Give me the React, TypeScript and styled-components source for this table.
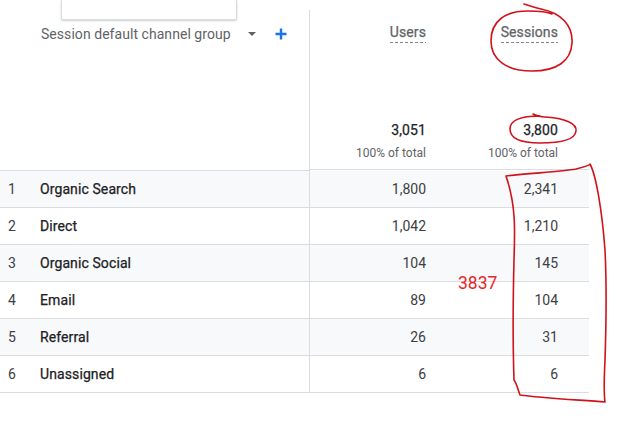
import React from "react";
import styled, { createGlobalStyle } from "styled-components";

const Global = createGlobalStyle`
  html, body { margin: 0; padding: 0; background: #fff; }
  body { font-family: Roboto, "Liberation Sans", Arial, sans-serif; -webkit-font-smoothing: antialiased; }
`;

const medium = `font-weight: 400; -webkit-text-stroke: 0.25px currentColor; letter-spacing: 0.1px;`;

const Page = styled.div`
  position: relative;
  width: 630px;
  height: 422px;
  overflow: hidden;
  background: #fff;
`;

const Table = styled.div`
  width: 589px;
  display: grid;
  grid-template-columns: 310px 132px 132px 15px;
`;

const DimHeader = styled.div`
  height: 160px;
  margin-top: 10px;
  border-right: 1px solid #dadce0;
  border-bottom: 1px solid #dadce0;
  display: flex;
  flex-direction: column;
`;

const Card = styled.div`
  margin: -10px 0 0 61px;
  width: 174px;
  height: 19px;
  border: 1px solid #dadce0;
  border-top: none;
  border-radius: 0 0 2px 2px;
  box-shadow: 0 1px 2px rgba(60, 64, 67, 0.25);
  background: #fff;
`;

const DimTitleRow = styled.div`
  display: flex;
  align-items: center;
  height: 28px;
  padding-left: 41px;
  color: #5f6368;
  font-size: 14px;
  letter-spacing: 0.05px;
`;

const Caret = styled.span`
  width: 0;
  height: 0;
  margin-left: 17px;
  border-left: 4px solid transparent;
  border-right: 4px solid transparent;
  border-top: 4px solid #5f6368;
`;

const PlusButton = styled.span`
  display: flex;
  margin-left: 19px;
  color: #1a73e8;
`;

const MetricHeader = styled.div`
  height: 170px;
  box-sizing: border-box;
  border-bottom: 1px solid #dadce0;
  padding: 23px 16px 8px 0;
  display: flex;
  flex-direction: column;
  align-items: flex-end;
  justify-content: space-between;
`;

const Filler = styled.div`
  height: 170px;
  box-sizing: border-box;
  border-bottom: 1px solid #dadce0;
`;

const MetricName = styled.span`
  ${medium}
  font-size: 14px;
  line-height: 18px;
  color: #5f6368;
  padding-bottom: 2px;
  background-image: repeating-linear-gradient(to right, #80868b 0 3px, transparent 3px 5px);
  background-size: 100% 1px;
  background-repeat: no-repeat;
  background-position: bottom left;
`;

const Totals = styled.div`
  display: flex;
  flex-direction: column;
  align-items: flex-end;
`;

const TotalValue = styled.span`
  ${medium}
  font-size: 14px;
  line-height: 20px;
  color: #202124;
`;

const TotalSub = styled.span`
  font-size: 12px;
  line-height: 16px;
  color: #5f6368;
  margin-top: 5px;
`;

const Cell = styled.div<{ $shaded: boolean }>`
  height: 37px;
  box-sizing: border-box;
  border-bottom: 1px solid #dadce0;
  background: ${(p) => (p.$shaded ? "#f8f9fa" : "#fff")};
  display: flex;
  align-items: center;
  font-size: 14px;
  color: #3c4043;
`;

const DimCell = styled(Cell)`
  border-right: 1px solid #dadce0;
`;

const Index = styled.span`
  flex: none;
  width: 40px;
  padding-left: 8px;
  box-sizing: border-box;
`;

const Label = styled.span`
  ${medium}
  color: #202124;
`;

const ValueCell = styled(Cell)`
  justify-content: flex-end;
  padding-right: 16px;
`;

const Annotations = styled.svg`
  position: absolute;
  left: 0;
  top: 0;
  pointer-events: none;
`;

const Note = styled.span`
  position: absolute;
  left: 458px;
  top: 273px;
  font-size: 17.5px;
  color: #e8262a;
  font-family: Roboto, "Liberation Sans", Arial, sans-serif;
`;

const rows = [
  { name: "Organic Search", users: "1,800", sessions: "2,341" },
  { name: "Direct", users: "1,042", sessions: "1,210" },
  { name: "Organic Social", users: "104", sessions: "145" },
  { name: "Email", users: "89", sessions: "104" },
  { name: "Referral", users: "26", sessions: "31" },
  { name: "Unassigned", users: "6", sessions: "6" },
];

export default function App() {
  return (
    <Page>
      <Global />
      <Table>
        <DimHeader>
          <Card />
          <DimTitleRow>
            Session default channel group
            <Caret />
            <PlusButton>
              <svg width="12" height="12" viewBox="0 0 12 12">
                <path d="M6 0.5v11M0.5 6h11" stroke="#1a73e8" strokeWidth="2.4" />
              </svg>
            </PlusButton>
          </DimTitleRow>
        </DimHeader>
        <MetricHeader>
          <MetricName>Users</MetricName>
          <Totals>
            <TotalValue>3,051</TotalValue>
            <TotalSub>100% of total</TotalSub>
          </Totals>
        </MetricHeader>
        <MetricHeader>
          <MetricName>Sessions</MetricName>
          <Totals>
            <TotalValue>3,800</TotalValue>
            <TotalSub>100% of total</TotalSub>
          </Totals>
        </MetricHeader>
        <Filler />
        {rows.map((r, i) => {
          const shaded = i % 2 === 0;
          return (
            <React.Fragment key={r.name}>
              <DimCell $shaded={shaded}>
                <Index>{i + 1}</Index>
                <Label>{r.name}</Label>
              </DimCell>
              <ValueCell $shaded={shaded}>{r.users}</ValueCell>
              <ValueCell $shaded={shaded}>{r.sessions}</ValueCell>
              <Cell $shaded={shaded} />
            </React.Fragment>
          );
        })}
      </Table>
      <Annotations width="630" height="422" viewBox="0 0 630 422">
        <g fill="none" stroke="#d0121b" strokeWidth="1.6" strokeLinecap="round" strokeLinejoin="round">
          <path d="M524 4 C530 6 536 8 541 9 C561 13 573 25 572 43 C571 61 557 71 532 71 C507 71 491 60 491 41 C491 21 505 11 528 11 C540 11 548 12 552 14" />
          <path d="M533 114 C537 116 540 117 544 117 C566 118 577 124 576 131 C575 140 560 143 540 143 C520 143 510 139 510 129 C510 120 522 116 540 116" />
          <path d="M506 176 C530 173 560 172 576 169 C584 167 590 165 590 164 C596 175 602 210 605 250 C607 290 606 330 605 360 C604 380 604 395 605 402 C580 400 540 398 520 395 C518 390 517 384 514 380 C513 350 513 300 514 260 C515 230 516 205 506 176 Z" />
        </g>
      </Annotations>
      <Note>3837</Note>
    </Page>
  );
}
